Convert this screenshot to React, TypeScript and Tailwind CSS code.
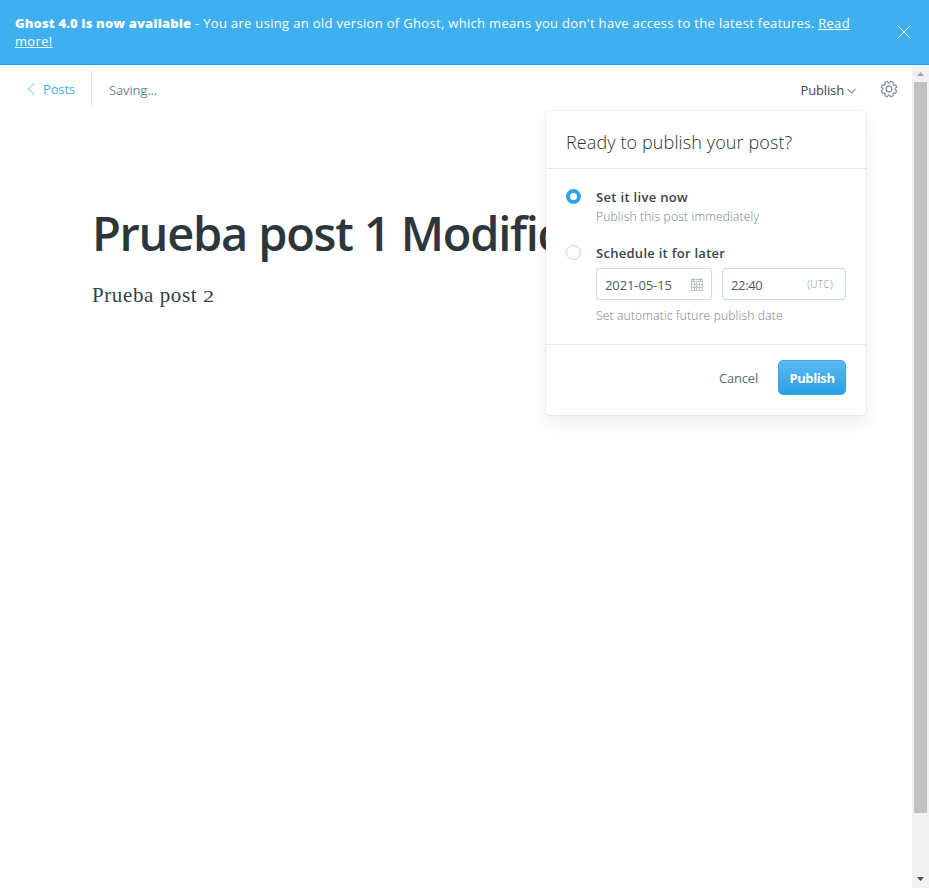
import React from "react";

const gearPoints = Array.from({ length: 8 }, (_, i) => {
  const mid = 22.5 + i * 45;
  return [
    [mid - 17, 6.1],
    [mid - 10, 7.9],
    [mid + 10, 7.9],
    [mid + 17, 6.1],
  ]
    .map(([deg, r]) => {
      const a = (deg * Math.PI) / 180;
      return `${(9 + r * Math.cos(a)).toFixed(2)},${(9 + r * Math.sin(a)).toFixed(2)}`;
    })
    .join(" ");
}).join(" ");

function Gear() {
  return (
    <svg className="block size-[18px]" viewBox="0 0 18 18" fill="none" stroke="#738a94" strokeWidth="1.1" strokeLinejoin="round">
      <polygon points={gearPoints} />
      <circle cx="9" cy="9" r="2.9" />
    </svg>
  );
}

function Calendar() {
  return (
    <svg className="block h-[13px] w-3" viewBox="0 0 12 13" fill="none" stroke="#bcc7cc" strokeWidth="1" shapeRendering="crispEdges">
      <path d="M.5 1.500h11v11H.5zM0 3.500h12M1 6.500h10M1 9.500h10M3.5 4v8M5.500 4v8M8.500 4v8" />
      <path d="M2.5 0v3M9.5 0v3" stroke="#a3b0b7" />
    </svg>
  );
}

function Banner() {
  return (
    <header className="flex h-[65px] shrink-0 items-start justify-between border-b border-[#1a9eec] bg-[#3eb0ef] pl-[15px] pr-[19px] pt-[14px] text-white">
      <p className="w-[850px] text-[13px] font-medium leading-[18px] whitespace-nowrap">
        <span className="font-extrabold tracking-[0.13px]">Ghost 4.0 is now available</span>
        <span className="tracking-[0.32px]"> - You are using an old version of Ghost, which means you don't have access to the latest features. <a className="underline">Read<br />more!</a></span>
      </p>
      <svg className="mt-[12px] size-3 shrink-0" viewBox="0 0 12 12" stroke="white" strokeWidth="1" fill="none">
        <path d="M.3.3l11.4 11.4M11.7.3L.3 11.7" />
      </svg>
    </header>
  );
}

function Toolbar() {
  return (
    <div className="flex h-[49px] items-start pl-[27px] pr-[14px] text-[13px] leading-[18px] tracking-[-0.15px]">
      <div className="mt-[6px] flex h-9 w-[65px] items-center border-r border-[#dfe8ee] text-[#3eb0ef]">
        <svg className="mr-2 h-3 w-2" viewBox="0 0 8 12" fill="none" stroke="#74c6f4" strokeWidth="1">
          <path d="M7.5.4L1 6l6.5 5.6" />
        </svg>
        <span>Posts</span>
      </div>
      <span className="ml-[17px] mt-4 text-[#738a94]">Saving...</span>
      <div className="ml-auto mt-4 flex items-center text-[#3c484e]">
        <span>Publish</span>
        <svg className="ml-[3px] mt-[2px] h-[6px] w-[9px]" viewBox="0 0 9 6" fill="none" stroke="#6c8f9f" strokeWidth="1.1">
          <path d="M.5.8l4 4.200 4-4.200" />
        </svg>
      </div>
      <div className="ml-6 mt-[15px]"><Gear /></div>
    </div>
  );
}

function PublishMenu() {
  return (
    <section className="absolute left-[546px] top-[46px] h-[304px] w-[320px] rounded-[4px] bg-white text-[13px] shadow-[0_0_0_1px_rgba(99,114,130,0.09),0_8px_16px_rgba(27,39,51,0.08)]">
      <h2 className="h-[58px] border-b border-[#dfe9f1] pl-5 pt-[19px] text-[18px] font-light leading-6 tracking-[0.11px] text-[#263238]">Ready to publish your post?</h2>
      <div className="h-[176px] border-b border-[#e3ecf1] px-5 pt-[20px]">
        <div className="flex">
          <span className="mr-[15px] size-[15px] shrink-0 rounded-full border-4 border-[#2fa4e8] bg-white" />
          <div>
            <div className="-mt-px text-[13px] font-semibold leading-[18px] tracking-[0.32px] text-[#394449]">Set it live now</div>
            <div className="mt-[2px] text-[12px] font-light leading-[18px] tracking-[0.2px] text-[#6b828c]">Publish this post immediately</div>
          </div>
        </div>
        <div className="mt-[19px] flex">
          <span className="mr-[15px] size-[15px] shrink-0 rounded-full border border-[#b9d9e9] bg-white" />
          <div>
            <div className="-mt-px text-[13px] font-semibold leading-[18px] tracking-[0.28px] text-[#394449]">Schedule it for later</div>
            <div className="mt-[6px] flex gap-[10px] tracking-[-0.1px] text-[#4c5a61]">
              <div className="flex h-8 w-[116px] items-center justify-between rounded-[3px] border border-[#cfdfe7] px-2">
                <span className="pt-[3px]">2021-05-15</span>
                <Calendar />
              </div>
              <div className="flex h-8 w-[124px] items-center justify-between rounded-[3px] border border-[#cfdfe7] pl-2 pr-3">
                <span className="pt-[3px] tracking-[-0.35px]">22:40</span>
                <span className="text-[10px] font-light tracking-[0.35px] text-[#7d8e97]">(UTC)</span>
              </div>
            </div>
            <div className="mt-[7px] text-[12px] font-light leading-[18px] tracking-[0.2px] text-[#6b828c]">Set automatic future publish date</div>
          </div>
        </div>
      </div>
      <div className="flex items-center justify-end gap-5 pr-5 pt-[15px]">
        <span className="pt-[2px] tracking-[-0.2px] text-[#5b6e77]">Cancel</span>
        <button className="h-[35px] w-[68px] rounded-[5px] border border-[#3ca6e4] bg-linear-to-b from-[#5ab9f1] to-[#27a0e2] pt-[2px] text-[13px] font-bold tracking-[-0.4px] text-white">Publish</button>
      </div>
    </section>
  );
}

function Scrollbar() {
  return (
    <aside className="flex w-[17px] shrink-0 flex-col items-center bg-[#f1f1f1]">
      <svg className="h-[17px] w-[17px]" viewBox="0 0 17 17"><path d="M5 11h7L8.500 7z" fill="#a3a3a3" /></svg>
      <div className="h-[731px] w-[13px] bg-[#c1c1c1]" />
      <svg className="mt-auto h-[17px] w-[17px]" viewBox="0 0 17 17"><path d="M5 6h7L8.500 10z" fill="#505050" /></svg>
    </aside>
  );
}

export default function App() {
  return (
    <div className="flex h-[888px] w-[929px] flex-col overflow-hidden bg-white font-['Open_Sans','Noto_Sans',sans-serif]">
      <Banner />
      <div className="flex min-h-0 flex-1">
        <main className="relative min-w-0 flex-1 overflow-hidden">
          <Toolbar />
          <article className="pl-[92px] pt-[89px]">
            <h1 className="text-[47px] font-semibold leading-[60px] tracking-[-1.3px] whitespace-nowrap text-[#2c363b] [word-spacing:0.5px]">Prueba post 1 Modific</h1>
            <p className="mt-[17px] font-['Liberation_Serif',serif] text-[21px] leading-[30px] tracking-[0.6px] text-[#343f44]">Prueba post <span className="inline-block origin-left scale-x-140 text-[16px] leading-none">2</span></p>
          </article>
          <PublishMenu />
        </main>
        <Scrollbar />
      </div>
    </div>
  );
}
